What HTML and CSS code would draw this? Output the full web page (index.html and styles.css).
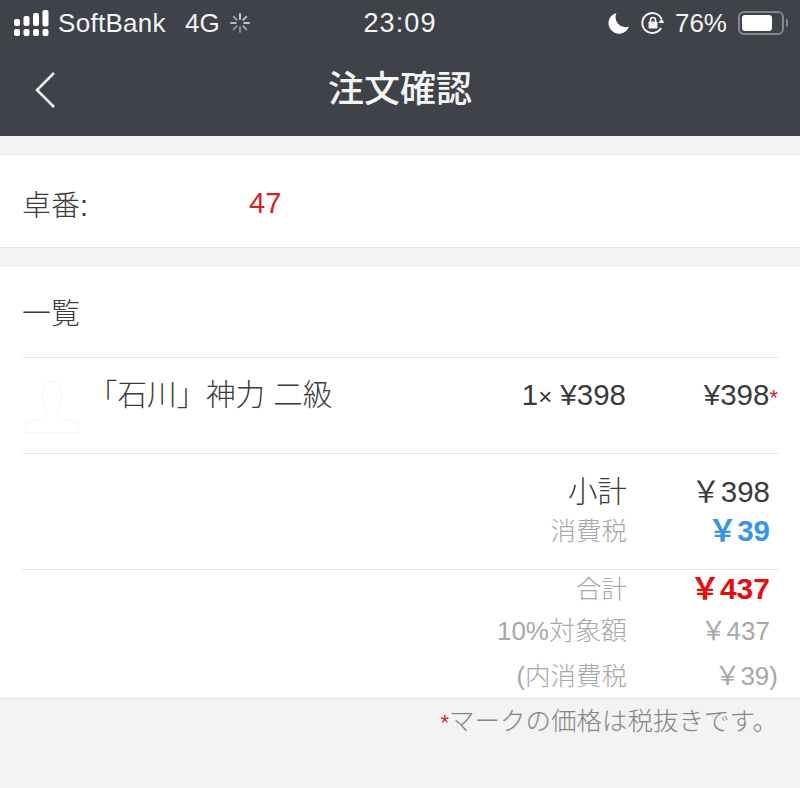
FILE: index.html
```html
<!DOCTYPE html>
<html lang="ja">
<head>
<meta charset="utf-8">
<title>注文確認</title>
<link rel="stylesheet" href="styles.css">
</head>
<body>
<header class="top">
  <div class="status">
    <div class="status-left">
      <svg class="signal" width="35" height="27" viewBox="0 0 35 27">
        <g fill="#fff">
          <rect x="0" y="9" width="6" height="7" rx="2"/><rect x="0" y="19" width="6" height="7" rx="2"/>
          <rect x="9.500" y="6" width="6" height="10" rx="2"/><rect x="9.500" y="19" width="6" height="7" rx="2"/>
          <rect x="19" y="3" width="6" height="13" rx="2"/><rect x="19" y="19" width="6" height="7" rx="2"/>
          <rect x="28.500" y="0" width="6" height="16.500" rx="2"/><rect x="28.500" y="19" width="6" height="7" rx="2"/>
        </g>
      </svg>
      <span class="carrier">SoftBank</span>
      <span class="net">4G</span>
      <svg class="spinner" width="20" height="20" viewBox="0 0 22 22" stroke="#d5d6d8" stroke-width="2" stroke-linecap="round">
        <path d="M11 1v5.500"/><path d="M18 4l-3.500 3.500" opacity=".9"/><path d="M21 11h-5.500" opacity=".85"/><path d="M18 18l-3.500-3.500" opacity=".7"/>
        <path d="M11 21v-5.500" opacity=".55"/><path d="M4 18l3.500-3.500" opacity=".55"/><path d="M1 11h5.500" opacity=".8"/><path d="M4 4l3.500 3.500" opacity=".65"/>
      </svg>
    </div>
    <div class="clock">23:09</div>
    <div class="status-right">
      <svg class="moon" width="22" height="22" viewBox="0 0 22 22"><path fill="#fff" d="M8.500 1A10.500 10.500 0 1 0 21 14.500 10 10 0 0 1 8.500 1z"/></svg>
      <svg class="lock" width="24" height="24" viewBox="0 0 24 24" fill="none" stroke="#f2f2f2" stroke-width="2">
        <path d="M20 17A10 10 0 1 1 20.500 8"/>
        <path fill="#f2f2f2" stroke="none" d="M23.500 12h-6l3-4.500z"/>
        <rect x="7.500" y="10.500" width="9" height="7" rx="1" fill="#f2f2f2" stroke="none"/>
        <path stroke-width="1.500" d="M9.500 11V9a2.500 2.500 0 0 1 5 0v2"/>
      </svg>
      <span class="pct">76%</span>
      <div class="battery"><div class="battery-fill"></div></div>
      <div class="battery-tip"></div>
    </div>
  </div>
  <div class="nav">
    <svg class="back" width="22" height="38" viewBox="0 0 22 38" fill="none" stroke="#f4f4f4" stroke-width="2.500"><path d="M20 2L3 19l17 17"/></svg>
    <h1 class="title">注文確認</h1>
  </div>
</header>

<section class="card table-card">
  <span class="table-label">卓番:</span>
  <span class="table-no">47</span>
</section>

<section class="card list-card">
  <h2 class="list-title">一覧</h2>
  <div class="item">
    <svg class="thumb" width="60" height="56" viewBox="0 0 60 56" fill="none" stroke="#f8f8f8" stroke-width="1.500">
      <path d="M20 15a10 12 0 0 1 20 0c0 8-4 13-5 18l3 5 16 8c3 2 3 9 1 9H5c-2 0-2-7 1-9l16-8 3-5c-1-5-5-10-5-18z"/>
    </svg>
    <div class="item-name">「石川」神力 二級</div>
    <div class="item-qty">1<span class="times">×</span> ¥398</div>
    <div class="item-total">¥398<span class="mark">*</span></div>
  </div>
  <div class="sums">
    <div class="sum-row sub"><span class="sum-label dark">小計</span><span class="sum-value large dark">￥398</span></div>
    <div class="sum-row tax"><span class="sum-label">消費税</span><span class="sum-value large blue">￥39</span></div>
  </div>
  <div class="totals">
    <div class="sum-row grand"><span class="sum-label">合計</span><span class="sum-value red">￥437</span></div>
    <div class="sum-row target"><span class="sum-label wide-label">10%対象額</span><span class="sum-value">￥437</span></div>
    <div class="sum-row inner"><span class="sum-label">(内消費税</span><span class="sum-value wide">￥39)</span></div>
  </div>
</section>

<p class="note"><span class="mark">*</span>マークの価格は税抜きです。</p>
</body>
</html>
```
FILE: styles.css
```css
* { box-sizing: border-box; }
html, body { margin: 0; padding: 0; }
body {
  width: 800px;
  height: 788px;
  overflow: hidden;
  background: #f3f3f3;
  color: #3b3b3b;
  font-family: "Liberation Sans", "Noto Sans CJK JP", sans-serif;
}
.top { background: #3f4249; height: 136px; color: #f4f4f4; }
.status {
  height: 46px;
  display: grid;
  grid-template-columns: 1fr auto 1fr;
  align-items: center;
  font-size: 26px;
}
.status-left { display: flex; align-items: center; padding-left: 14px; }
.signal { margin-right: 9px; }
.carrier { letter-spacing: .3px; margin-right: 19px; }
.net { margin-right: 10px; }
.clock { font-size: 27px; letter-spacing: 1.100px; }
.status-right { display: flex; align-items: center; justify-content: flex-end; padding-right: 12px; }
.moon { margin-right: 11px; }
.lock { margin-right: 10px; }
.pct { margin-right: 11px; }
.battery {
  width: 46px;
  height: 24px;
  border: 2px solid #85878c;
  border-radius: 6px;
  padding: 2px;
}
.battery-fill { width: 30px; height: 16px; background: #fff; border-radius: 3px; }
.battery-tip { width: 2px; height: 8px; margin-left: 2px; background: #85878c; border-radius: 0 2px 2px 0; }
.nav { height: 90px; display: flex; align-items: center; justify-content: center; position: relative; padding-bottom: 2px; }
.back { position: absolute; left: 34px; top: 25px; }
.title { margin: 0; font-size: 36px; font-weight: 500; line-height: 1; color: #f6f6f6; }

.card { background: #fff; border-top: 1px solid #e7e7e7; border-bottom: 1px solid #e7e7e7; }
.table-card {
  margin-top: 18px;
  height: 94px;
  padding: 4px 22px 0;
  display: flex;
  align-items: center;
  font-size: 29px;
  font-weight: 300;
}
.table-label { width: 227px; }
.table-no { color: #d81e1e; font-weight: 400; }
.list-card { margin-top: 17px; height: 434px; padding: 0 21px 0 22px; }
.list-title { margin: 0; height: 92px; font-size: 29px; font-weight: 300; line-height: 96px; border-bottom: 1px solid #e8e8e8; }
.item {
  height: 96px;
  display: flex;
  align-items: flex-start;
  font-size: 29px;
  line-height: 74px;
  border-bottom: 1px solid #e8e8e8;
}
.thumb { margin: 20px 10px 0 0; flex: none; }
.item-name { width: 402px; margin-left: -4px; font-weight: 300; white-space: nowrap; font-size: 29.500px; }
.item-qty { width: 136px; text-align: right; white-space: nowrap; font-size: 29.500px; }
.times { font-size: 24px; }
.item-total { width: 152px; text-align: right; font-size: 29.500px; }
.mark { color: #e01c1c; font-size: 22px; font-weight: 400; }
.sums { height: 116px; border-bottom: 1px solid #e8e8e8; padding-top: 15px; }
.sum-row { display: flex; align-items: center; color: #a8a8a8; }
.sum-label { width: 605px; text-align: right; white-space: nowrap; font-size: 25.500px; font-weight: 300; }
.sum-label.wide-label { font-size: 26px; }
.sum-value { width: 143px; text-align: right; white-space: nowrap; font-size: 26px; }
.sum-value.large { font-size: 29.500px; }
.sum-value.wide { width: 151px; }
.sub { height: 40px; }
.tax { height: 38px; }
.dark { color: #3b3b3b; }
.sum-label.dark { font-size: 29.500px; }
.sum-value.blue { color: #3a96e4; font-weight: 700; }
.sum-value.red { color: #e60d0d; font-weight: 700; font-size: 30px; }
.grand { height: 38px; margin-top: -3px; }
.target { height: 44px; margin-top: 1px; }
.inner { height: 46px; }
.note { margin: 8px 22px 0 0; text-align: right; font-size: 25.500px; line-height: 28px; color: #858585; font-weight: 300; }
```
